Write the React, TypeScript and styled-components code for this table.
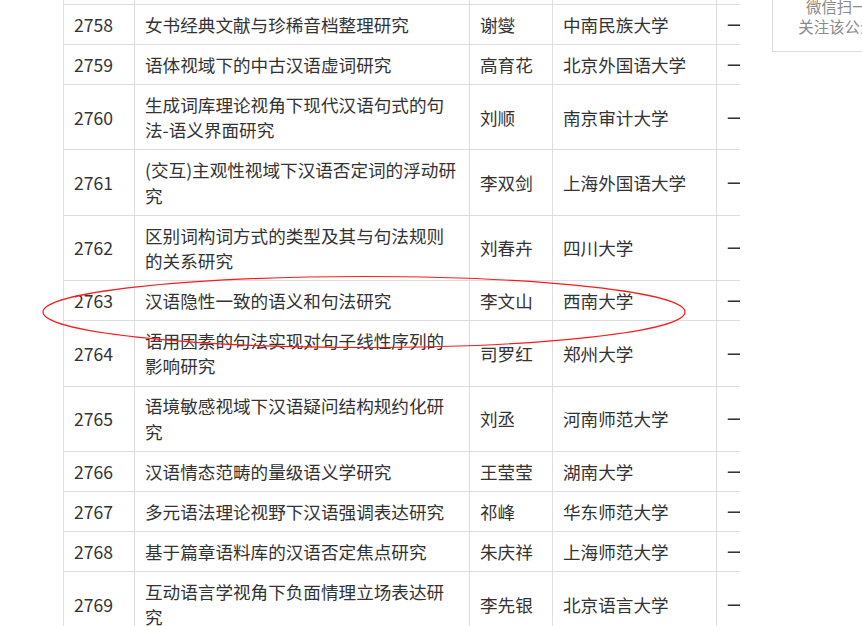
import React from "react";
import styled, { createGlobalStyle } from "styled-components";

const GlobalStyle = createGlobalStyle`
  html, body {
    margin: 0;
    padding: 0;
    background: #ffffff;
    overflow: hidden;
  }
  body {
    font-family: "Microsoft YaHei", "Noto Sans CJK SC", "Noto Sans", sans-serif;
    color: #333333;
  }
`;

const Page = styled.div`
  position: relative;
  width: 862px;
  height: 626px;
  overflow: hidden;
`;

const Layout = styled.div`
  display: flex;
  align-items: flex-start;
  margin-top: -36px;
  padding-left: 63px;
`;

const TableClip = styled.div`
  width: 677px;
  flex: none;
  overflow: hidden;
`;

const Table = styled.table`
  border-collapse: collapse;
  table-layout: fixed;
  width: 773px;
  font-size: 17.6px;
  color: #333333;
`;

const Cell = styled.td<{ $nowrap?: boolean }>`
  border: 1px solid #dddddd;
  padding: 6.8px 10px;
  line-height: 25.4px;
  vertical-align: middle;
  text-align: left;
  white-space: ${(p) => (p.$nowrap ? "nowrap" : "normal")};
  overflow: hidden;
`;

const SpacerRow = styled.tr`
  height: 40px;
`;

const Sidebar = styled.aside`
  flex: none;
  width: 145px;
  margin-left: 32px;
  box-sizing: border-box;
  border: 1px solid #dddddd;
  padding: 31px 0 15px;
  text-align: center;
  font-size: 15.4px;
  line-height: 20px;
  color: #8a8a8a;
`;

const SideLine = styled.div`
  white-space: nowrap;
`;

const Annotation = styled.svg`
  position: absolute;
  left: 0;
  top: 0;
  pointer-events: none;
`;

type Row = { id: string; title: string; name: string; org: string };

const rows: Row[] = [
  { id: "2758", title: "女书经典文献与珍稀音档整理研究", name: "谢燮", org: "中南民族大学" },
  { id: "2759", title: "语体视域下的中古汉语虚词研究", name: "高育花", org: "北京外国语大学" },
  { id: "2760", title: "生成词库理论视角下现代汉语句式的句法-语义界面研究", name: "刘顺", org: "南京审计大学" },
  { id: "2761", title: "(交互)主观性视域下汉语否定词的浮动研究", name: "李双剑", org: "上海外国语大学" },
  { id: "2762", title: "区别词构词方式的类型及其与句法规则的关系研究", name: "刘春卉", org: "四川大学" },
  { id: "2763", title: "汉语隐性一致的语义和句法研究", name: "李文山", org: "西南大学" },
  { id: "2764", title: "语用因素的句法实现对句子线性序列的影响研究", name: "司罗红", org: "郑州大学" },
  { id: "2765", title: "语境敏感视域下汉语疑问结构规约化研究", name: "刘丞", org: "河南师范大学" },
  { id: "2766", title: "汉语情态范畴的量级语义学研究", name: "王莹莹", org: "湖南大学" },
  { id: "2767", title: "多元语法理论视野下汉语强调表达研究", name: "祁峰", org: "华东师范大学" },
  { id: "2768", title: "基于篇章语料库的汉语否定焦点研究", name: "朱庆祥", org: "上海师范大学" },
  { id: "2769", title: "互动语言学视角下负面情理立场表达研究", name: "李先银", org: "北京语言大学" },
  { id: "2770", title: "汉语篇章中的话题链研究", name: "", org: "" },
];

export default function App() {
  return (
    <>
      <GlobalStyle />
      <Page>
        <Layout>
          <TableClip>
            <Table>
              <colgroup>
                <col style={{ width: 71 }} />
                <col style={{ width: 335 }} />
                <col style={{ width: 83 }} />
                <col style={{ width: 164 }} />
                <col style={{ width: 120 }} />
              </colgroup>
              <tbody>
                <SpacerRow>
                  <Cell />
                  <Cell />
                  <Cell />
                  <Cell />
                  <Cell />
                </SpacerRow>
                {rows.map((r) => (
                  <tr key={r.id}>
                    <Cell>{r.id}</Cell>
                    <Cell>{r.title}</Cell>
                    <Cell $nowrap>{r.name}</Cell>
                    <Cell $nowrap>{r.org}</Cell>
                    <Cell $nowrap>一般项目</Cell>
                  </tr>
                ))}
              </tbody>
            </Table>
          </TableClip>
          <Sidebar>
            <SideLine>微信扫一扫</SideLine>
            <SideLine>关注该公众号</SideLine>
          </Sidebar>
        </Layout>
        <Annotation width="862" height="626" viewBox="0 0 862 626">
          <ellipse cx="364" cy="312" rx="321" ry="35.5" fill="none" stroke="#ff1a1a" strokeWidth="1.2" />
        </Annotation>
      </Page>
    </>
  );
}
